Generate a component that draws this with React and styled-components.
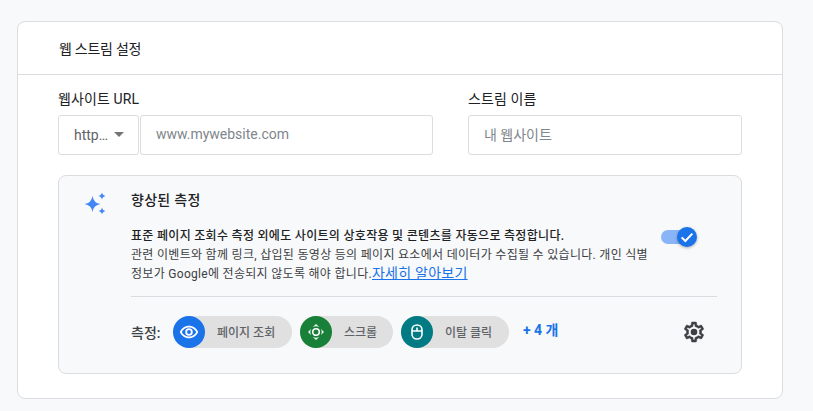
import React from "react";
import styled, { createGlobalStyle } from "styled-components";

const Global = createGlobalStyle`
  html, body { margin: 0; padding: 0; background: #f8f9fa; }
  body { font-family: Roboto, "Noto Sans CJK KR", sans-serif; overflow: hidden; }
  * { box-sizing: border-box; }
`;

const Page = styled.div`
  width: 813px;
  height: 411px;
  padding: 21px 30px 0 17px;
`;
const Card = styled.section`
  width: 766px;
  height: 378px;
  background: #fff;
  border: 1px solid #dadce0;
  border-radius: 8px;
`;
const CardHeader = styled.header`
  height: 53px;
  padding: 0 41px;
  display: flex;
  align-items: center;
  border-bottom: 1px solid #dadce0;
  font-size: 14px;
  letter-spacing: -0.25px;
  color: #202124;
`;
const Body = styled.div`
  padding: 14px 40px 0;
`;
const Fields = styled.div`
  display: flex;
  gap: 35px;
`;
const Field = styled.div`
  width: ${(p) => p.$w}px;
`;
const Label = styled.div`
  height: 26px;
  line-height: 20px;
  font-size: 14px;
  letter-spacing: 0.1px;
  color: #202124;
`;
const InputRow = styled.div`
  display: flex;
  gap: 1px;
`;
const Select = styled.div`
  width: 81px;
  height: 40px;
  flex: none;
  padding: 0 0 1px 15px;
  display: flex;
  align-items: center;
  gap: 6px;
  border: 1px solid #dadce0;
  border-radius: 3px;
  font-size: 14px;
  color: #5f6368;
`;
const Arrow = styled.span`
  width: 0;
  height: 0;
  border-left: 5px solid transparent;
  border-right: 5px solid transparent;
  border-top: 5px solid #757575;
`;
const Input = styled.div`
  flex: 1;
  height: 40px;
  padding: 0 0 2px 15px;
  display: flex;
  align-items: center;
  border: 1px solid #dadce0;
  border-radius: 3px;
  font-size: 14px;
  color: #80868b;
`;
const Panel = styled.div`
  margin-top: 20px;
  height: 199px;
  display: flex;
  background: #f8f9fa;
  border: 1px solid #dadce0;
  border-radius: 8px;
  padding: 14px 24px 0 24px;
`;
const Spark = styled.svg`
  width: 24px;
  height: 24px;
  flex: none;
  margin-top: 3px;
`;
const PanelMain = styled.div`
  flex: 1;
  margin-left: 24px;
`;
const PanelTitle = styled.div`
  font-size: 14px;
  font-weight: 500;
  letter-spacing: 0.3px;
  line-height: 20px;
  color: #202124;
`;
const DescRow = styled.div`
  margin-top: 17px;
  display: flex;
  justify-content: space-between;
`;
const Desc = styled.p`
  margin: 0;
  width: 525px;
  font-size: 12px;
  letter-spacing: 0.3px;
  line-height: 18.5px;
  color: #3c4043;
`;
const Lead = styled.span`
  font-weight: 500;
  color: #202124;
`;
const More = styled.a`
  font-size: 14px;
  letter-spacing: 0.25px;
  color: #1a73e8;
  text-decoration: underline;
`;
const Toggle = styled.div`
  position: relative;
  width: 30px;
  height: 14px;
  margin: 3px 26px 0 0;
  border-radius: 7px;
  background: #8ab4f8;
`;
const Knob = styled.div`
  position: absolute;
  left: 16px;
  top: -3px;
  width: 20px;
  height: 20px;
  border-radius: 50%;
  background: #1a73e8;
  box-shadow: 0 1px 3px rgba(60, 64, 67, 0.4);
  display: flex;
  align-items: center;
  justify-content: center;
`;
const Divider = styled.div`
  height: 1px;
  margin-top: 12px;
  background: #dadce0;
`;
const Events = styled.div`
  margin-top: 19px;
  display: flex;
  align-items: center;
  height: 32px;
`;
const EventsLabel = styled.span`
  font-size: 14px;
  color: #3c4043;
  font-weight: 500;
  width: 42px;
`;
const Chip = styled.div`
  display: flex;
  align-items: center;
  width: ${(p) => p.$w}px;
  height: 32px;
  margin-right: 8px;
  border-radius: 16px;
  background: #e0e0e0;
  font-size: 12px;
  font-weight: 500;
  color: #5f6368;
`;
const ChipIcon = styled.span`
  width: 32px;
  height: 32px;
  flex: none;
  margin-right: 12px;
  border-radius: 50%;
  background: ${(p) => p.$c};
  display: flex;
  align-items: center;
  justify-content: center;
`;
const Plus = styled.span`
  margin: 0 0 5px 6px;
  font-size: 14px;
  font-weight: 700;
  color: #1a73e8;
`;
const Gear = styled.svg`
  width: 24px;
  height: 24px;
  margin-left: auto;
  margin-right: 11px;
`;

export default function App() {
  return (
    <Page>
      <Global />
      <Card>
        <CardHeader>웹 스트림 설정</CardHeader>
        <Body>
          <Fields>
            <Field $w={375}>
              <Label>웹사이트 URL</Label>
              <InputRow>
                <Select>http… <Arrow /></Select>
                <Input>www.mywebsite.com</Input>
              </InputRow>
            </Field>
            <Field $w={274}>
              <Label>스트림 이름</Label>
              <Input>내 웹사이트</Input>
            </Field>
          </Fields>
          <Panel>
            <Spark viewBox="0 0 24 24">
              <path fill="#4285f4" d="M9.500 3Q10.500 10 17.500 11 10.500 12 9.500 19 8.500 12 1.500 11 8.500 10 9.500 3Z M19 -0.500Q19.500 2.500 22.500 3 19.500 3.500 19 6.500 18.500 3.500 15.500 3 18.500 2.500 19-0.500Z M19 14.500Q19.500 17.500 22.500 18 19.500 18.500 19 21.500 18.500 18.500 15.500 18 18.500 17.500 19 14.500Z" />
            </Spark>
            <PanelMain>
              <PanelTitle>향상된 측정</PanelTitle>
              <DescRow>
                <Desc>
                  <Lead>표준 페이지 조회수 측정 외에도 사이트의 상호작용 및 콘텐츠를 자동으로 측정합니다.</Lead><br />
                  관련 이벤트와 함께 링크, 삽입된 동영상 등의 페이지 요소에서 데이터가 수집될 수 있습니다. 개인 식별 정보가 Google에 전송되지 않도록 해야 합니다.<More>자세히 알아보기</More>
                </Desc>
                <Toggle>
                  <Knob>
                    <svg width="16" height="16" viewBox="0 0 24 24"><path fill="none" stroke="#fff" strokeWidth="3" d="M4 12.500 9.500 18 20 7" /></svg>
                  </Knob>
                </Toggle>
              </DescRow>
              <Divider />
              <Events>
                <EventsLabel>측정:</EventsLabel>
                <Chip $w={119}>
                  <ChipIcon $c="#1a73e8">
                    <svg width="20" height="20" viewBox="0 0 24 24"><path fill="#fff" fillRule="evenodd" d="M12 4.500C7 4.500 2.700 7.600 1 12c1.700 4.400 6 7.500 11 7.500s9.300-3.100 11-7.500c-1.700-4.400-6-7.500-11-7.500zM12 17.500c-3.800 0-7-2.200-8.700-5.500C5 8.700 8.200 6.500 12 6.500s7 2.200 8.700 5.500c-1.700 3.300-4.900 5.500-8.700 5.500zM12 7.500a4.500 4.500 0 1 0 0 9 4.500 4.500 0 0 0 0-9zm0 6.800a2.300 2.300 0 1 1 0-4.600 2.300 2.300 0 0 1 0 4.600z" /></svg>
                  </ChipIcon>
                  페이지 조회
                </Chip>
                <Chip $w={93}>
                  <ChipIcon $c="#188038">
                    <svg width="16" height="16" viewBox="0 0 16 16"><path fill="#fff" d="M8 0 11.300 3.300A6.200 6.200 0 0 0 4.700 3.300ZM8 16 4.700 12.700A6.200 6.200 0 0 0 11.300 12.700ZM0 8 3.300 4.700A6.200 6.200 0 0 0 3.300 11.300ZM16 8 12.700 11.300A6.200 6.200 0 0 0 12.700 4.700Z" /><circle cx="8" cy="8" r="3.300" fill="none" stroke="#fff" strokeWidth="1.600" /></svg>
                  </ChipIcon>
                  스크롤
                </Chip>
                <Chip $w={108}>
                  <ChipIcon $c="#007b83">
                    <svg width="16" height="16" viewBox="0 0 16 16"><path fill="none" stroke="#fff" strokeWidth="1.600" d="M8 1C5.200 1 3 3 3 5.800V10.200C3 13 5.200 15 8 15S13 13 13 10.200V5.800C13 3 10.800 1 8 1ZM3 7H13M8 3.500V7" /></svg>
                  </ChipIcon>
                  이탈 클릭
                </Chip>
                <Plus>+ 4 개</Plus>
                <Gear viewBox="0 0 24 24">
                  <path fill="#3c4043" stroke="#3c4043" strokeWidth="0.5" d="M19.430 12.980c.04-.32.07-.64.07-.98 0-.34-.03-.66-.07-.98l2.110-1.650c.19-.15.24-.42.12-.64l-2-3.460a.5.5 0 0 0-.61-.22l-2.490 1c-.52-.4-1.080-.73-1.690-.98l-.38-2.650A.49.49 0 0 0 14 2h-4c-.25 0-.46.18-.49.42l-.38 2.650c-.61.25-1.170.59-1.690.98l-2.490-1a.5.5 0 0 0-.61.22l-2 3.460c-.13.22-.07.49.12.64l2.110 1.650c-.04.32-.07.65-.07.98 0 .33.03.66.07.98l-2.110 1.650c-.19.15-.24.42-.12.64l2 3.460c.12.22.39.3.61.22l2.490-1c.52.4 1.080.73 1.690.98l.38 2.650c.03.24.24.42.49.42h4c.25 0 .46-.18.49-.42l.38-2.650c.61-.25 1.170-.59 1.690-.98l2.490 1c.23.09.49 0 .61-.22l2-3.460c.12-.22.07-.49-.12-.64l-2.110-1.650zM17.450 11.270c.04.31.05.52.05.73 0 .21-.02.43-.05.73l-.14 1.130.89.7 1.080.84-.7 1.210-1.270-.51-1.040-.42-.9.68c-.43.32-.84.56-1.250.73l-1.060.43-.16 1.130-.2 1.350h-1.400l-.19-1.350-.16-1.130-1.060-.43c-.43-.18-.83-.41-1.230-.71l-.91-.7-1.060.43-1.270.51-.7-1.210 1.080-.84.89-.7-.14-1.130c-.03-.31-.05-.54-.05-.74s.02-.43.05-.73l.14-1.130-.89-.7-1.080-.84.7-1.210 1.270.51 1.040.42.9-.68c.43-.32.84-.56 1.250-.73l1.060-.43.16-1.130.2-1.350h1.390l.19 1.350.16 1.130 1.060.43c.43.18.83.41 1.230.71l.91.7 1.060-.43 1.270-.51.7 1.210-1.070.85-.89.7.14 1.130z" />
                  <circle cx="12" cy="12" r="3.300" fill="#3c4043" />
                </Gear>
              </Events>
            </PanelMain>
          </Panel>
        </Body>
      </Card>
    </Page>
  );
}
